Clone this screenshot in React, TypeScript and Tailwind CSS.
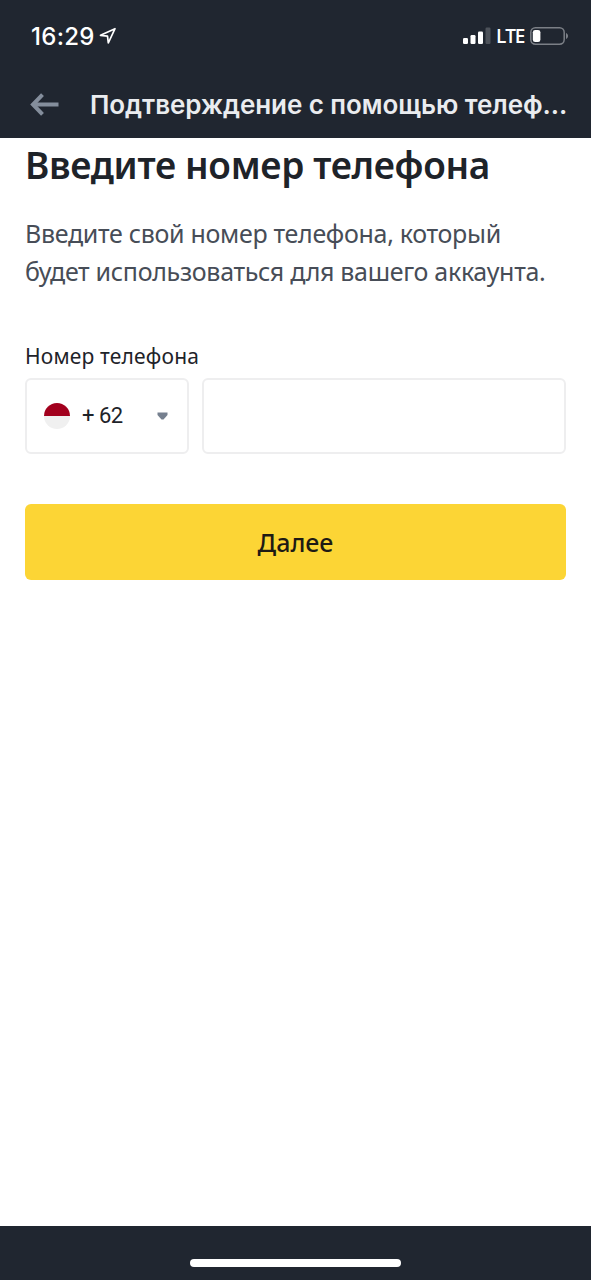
import type { ReactNode } from 'react';

interface CountryCode {
  dialCode: string;
  flag: ReactNode;
}

function IndonesiaFlag() {
  return (
    <span className="flex flex-col w-[26px] h-[26px] rounded-full overflow-hidden shrink-0">
      <span className="h-1/2 bg-[#a2001d]" />
      <span className="h-1/2 bg-[#f0f0f0]" />
    </span>
  );
}

const country: CountryCode = { dialCode: '+ 62', flag: <IndonesiaFlag /> };

function LocationIcon() {
  return (
    <svg width="18" height="18" viewBox="0 0 18 18" fill="none" className="ml-[4px]">
      <path
        d="M16 1.700 1.500 8.300l7 .9.8 6.800z"
        stroke="#fff"
        strokeWidth="1.7"
        strokeLinejoin="round"
      />
    </svg>
  );
}

function SignalIcon() {
  return (
    <svg width="28" height="18" viewBox="0 0 28 18">
      <rect x="0" y="11" width="5" height="6" rx="1.2" fill="#fff" />
      <rect x="7.5" y="8" width="5" height="9" rx="1.2" fill="#fff" />
      <rect x="15" y="4.5" width="5" height="12.5" rx="1.2" fill="#fff" />
      <rect x="22.5" y="0.5" width="5" height="16.5" rx="1.2" fill="#4d525a" />
    </svg>
  );
}

function BatteryIcon() {
  return (
    <svg width="39" height="18" viewBox="0 0 39 18">
      <rect x="0.8" y="0.8" width="33.4" height="16.4" rx="4.6" fill="none" stroke="#7b7f86" strokeWidth="1.5" />
      <rect x="2.8" y="2.9" width="7.6" height="12.2" rx="2.4" fill="#fff" />
      <path d="M36 6c1.3.5 2 1.600 2 3s-.7 2.500-2 3z" fill="#7b7f86" />
    </svg>
  );
}

function StatusBar() {
  return (
    <div className="h-[72px] flex items-center justify-between pl-[31px] pr-[22px] text-white">
      <div className="flex items-center">
        <span className="pt-px font-['Inter',sans-serif] font-medium text-[24px] tracking-[0.3px]">16:29</span>
        <LocationIcon />
      </div>
      <div className="flex items-center">
        <SignalIcon />
        <span className="w-[28px] ml-[5px] mr-[6px] whitespace-nowrap font-['Open_Sans',sans-serif] font-semibold text-[19px] tracking-[-1.1px]">
          LTE
        </span>
        <BatteryIcon />
      </div>
    </div>
  );
}

function NavBar({ title }: { title: string }) {
  return (
    <div className="h-[66px] flex items-center pl-[30px] pr-[24px]">
      <button aria-label="Назад" className="shrink-0 pb-px">
        <svg width="29" height="24" viewBox="0 0 29 24" fill="none" stroke="#848e9c" strokeWidth="4">
          <path d="M28.500 11.500H3.500" />
          <path d="M12.500 1.700 3 11.500l9.500 9.800" />
        </svg>
      </button>
      <h1 className="ml-[31px] pb-[2px] whitespace-nowrap font-['Inter',sans-serif] font-semibold text-[26px] tracking-[-0.05px] text-[#eaecef]">
        {title}
      </h1>
    </div>
  );
}

function PhoneForm() {
  return (
    <div className="px-[25px]">
      <h2 className="pt-[4px] text-[37px] leading-[46px] tracking-[-0.33px] font-semibold text-[#1e2329] whitespace-nowrap">
        Введите номер телефона
      </h2>
      <p className="mt-[26px] text-[25px] leading-[38px] tracking-[-0.31px] text-[#474d57] whitespace-nowrap">
        Введите свой номер телефона, который
        <br />
        будет использоваться для вашего аккаунта.
      </p>
      <label htmlFor="phone" className="mt-[50px] block text-[21px] leading-[32px] tracking-[0.18px] text-[#1e2329]">
        Номер телефона
      </label>
      <div className="mt-[6px] flex gap-[13px]">
        <button className="w-[164px] h-[76px] flex items-center pl-[17px] pr-[19px] border-2 border-[#eeeeef] rounded-md">
          {country.flag}
          <span className="ml-[12px] pb-[2px] font-['Roboto',sans-serif] text-[22px] tracking-[-0.5px] text-[#1e2329]">
            {country.dialCode}
          </span>
          <svg width="11" height="8" viewBox="0 0 11 8" className="ml-auto">
            <path d="M.5.5h10v2.500L6.500 7.500h-2L.5 3z" fill="#76808f" />
          </svg>
        </button>
        <input
          id="phone"
          type="tel"
          className="flex-1 min-w-0 h-[76px] px-4 text-[21px] border-2 border-[#eeeeef] rounded-md outline-none"
        />
      </div>
      <button className="mt-[50px] w-full h-[76px] pt-[2px] rounded-md bg-[#fcd535] text-[25px] font-medium text-[#1e1a14]">
        Далее
      </button>
    </div>
  );
}

export default function App() {
  return (
    <div className="w-full h-screen flex flex-col overflow-hidden bg-white font-['Noto_Sans',sans-serif]">
      <header className="bg-[#202630] shrink-0">
        <StatusBar />
        <NavBar title="Подтверждение с помощью телеф..." />
      </header>
      <main className="flex-1">
        <PhoneForm />
      </main>
      <footer className="h-[54px] shrink-0 flex justify-center items-start pt-[33px] bg-[#202630]">
        <div className="w-[211px] h-[8px] rounded-full bg-white" />
      </footer>
    </div>
  );
}
